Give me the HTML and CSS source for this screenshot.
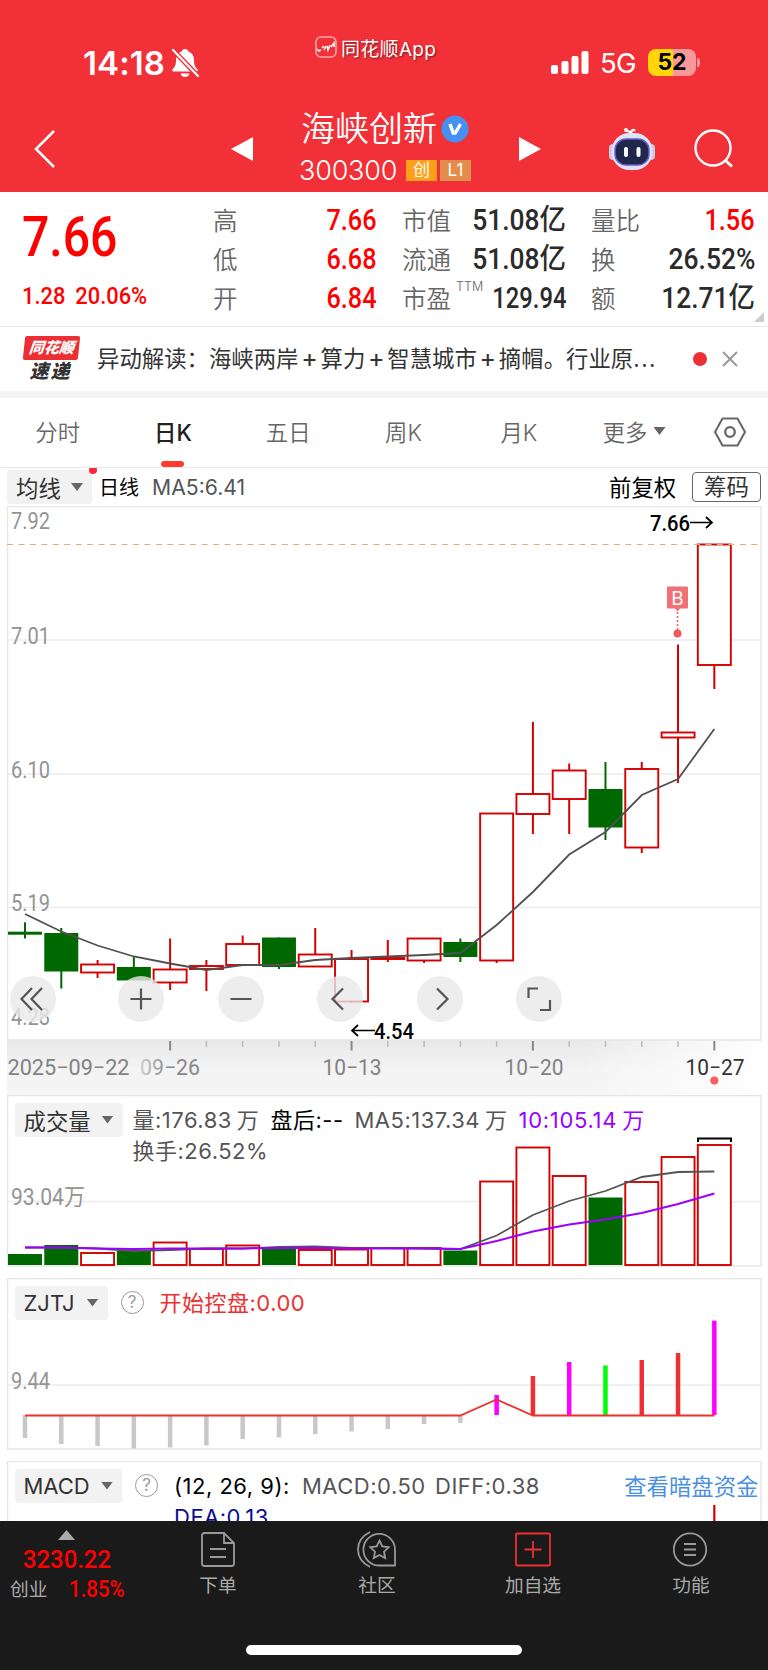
FILE: index.html
```html
<!DOCTYPE html>
<html lang="zh-CN">

<head>
    <meta charset="UTF-8">
    <meta name="viewport" content="width=device-width, initial-scale=1.0">
    <title>海峡创新 300300</title>
    <link rel="stylesheet" href="styles.css">
</head>

<body>
    <header class="header">
        <div class="status">
            <span class="time">14:18</span>
            <svg class="bell" width="28" height="30" viewBox="0 0 28 30">
                <path fill="#fff" d="M14 1c2 0 3 1 3.200 2.400c4 1.200 5.800 4.600 5.800 8.600c0 6 1.500 7 3.500 9.500c.6 1 .2 2-1 2H2.500c-1.200 0-1.600-1-1-2C3.500 19 5 18 5 12c0-4 1.800-7.400 5.800-8.600C11 2 12 1 14 1zM9.500 25.500h9c-.5 2-2.300 3.500-4.500 3.500s-4-1.500-4.500-3.500z" />
                <path stroke="#f23038" stroke-width="5" d="M1 1l26 27" />
                <path stroke="#fff" stroke-width="2.200" stroke-linecap="round" d="M2 2l25 26" />
            </svg>
            <div class="source">
                <svg width="22" height="22" viewBox="0 0 22 22" fill="none" stroke="#fff">
                    <rect x="1" y="1" width="20" height="20" rx="5" stroke-opacity=".6" stroke-width="1.500" />
                    <path stroke-width="1.500" d="M2 13l2 2 2-1M7 12l2-2M9 14l2-4M12 10l1 4 2-5M16 11l3-4v4" />
                </svg>
                <span>同花顺App</span>
            </div>
            <svg class="signal" width="38" height="24" viewBox="0 0 38 24" fill="#fff">
                <rect x="0" y="14" width="7" height="9" rx="2" />
                <rect x="10.500" y="10" width="7" height="13" rx="2" />
                <rect x="20.500" y="5" width="7" height="18" rx="2" />
                <rect x="30.500" y="0" width="7" height="23" rx="2" />
            </svg>
            <span class="network">5G</span>
            <div class="battery">52</div>
            <i class="nub"></i>
        </div>
        <nav class="nav">
            <svg class="back" width="22" height="40" viewBox="0 0 22 40" fill="none" stroke="#fff" stroke-width="2.500">
                <path d="M20 2L2 20l18 18" />
            </svg>
            <svg class="prev" width="22" height="24" viewBox="0 0 22 24" fill="#fff">
                <path d="M22 0v24L0 12z" />
            </svg>
            <div class="stock">
                <div class="name">海峡创新<svg width="28" height="28" viewBox="0 0 28 28">
                        <circle cx="14" cy="14" r="13.500" fill="#4590f0" />
                        <path d="M9 9l3.200 9h2L19.500 9" fill="none" stroke="#fff" stroke-width="3.400" />
                    </svg></div>
                <div class="code"><span>300300</span><b class="tag">创</b><b class="tag tag-l1">L1</b></div>
            </div>
            <svg class="next" width="22" height="24" viewBox="0 0 22 24" fill="#fff">
                <path d="M0 0v24l22-12z" />
            </svg>
            <svg class="robot" width="46" height="44" viewBox="0 0 46 44">
                <path d="M23 8c0-4-3-3-5-4M22 7c0-4 2-5 4-3" fill="none" stroke="#fff" stroke-width="2.200" />
                <circle cx="17" cy="3" r="2" fill="#fff" />
                <rect x="0" y="17" width="8" height="16" rx="4" fill="#c3cbe9" />
                <rect x="38" y="17" width="8" height="16" rx="4" fill="#c3cbe9" />
                <rect x="2.500" y="6" width="41" height="37" rx="18" fill="#dde4f8" />
                <rect x="6" y="12" width="34" height="26" rx="11" fill="#202849" stroke="#6a5bd2" stroke-width="1.500" />
                <rect x="15" y="20" width="4" height="10" rx="2" fill="#fff" />
                <rect x="27.500" y="20" width="4" height="10" rx="2" fill="#fff" />
            </svg>
            <svg class="search" width="40" height="40" viewBox="0 0 40 40" fill="none" stroke="#fff" stroke-width="2.400">
                <circle cx="19" cy="19" r="17.500" />
                <path d="M31.500 31.500L38 37.500" stroke-width="3" />
            </svg>
        </nav>
    </header>

    <section class="quote">
        <div class="last">
            <div class="price din">7.66</div>
            <div class="change din"><span>1.28</span><span>20.06%</span></div>
        </div>
        <dl class="col col-a">
            <div><dt>高</dt><dd class="din up">7.66</dd></div>
            <div><dt>低</dt><dd class="din up">6.68</dd></div>
            <div><dt>开</dt><dd class="din up">6.84</dd></div>
        </dl>
        <dl class="col col-b">
            <div><dt>市值</dt><dd class="din wide">51.08亿</dd></div>
            <div><dt>流通</dt><dd class="din wide">51.08亿</dd></div>
            <div><dt>市盈<sup>TTM</sup></dt><dd class="din tight">129.94</dd></div>
        </dl>
        <dl class="col col-c">
            <div><dt>量比</dt><dd class="din up">1.56</dd></div>
            <div><dt>换</dt><dd class="din wide">26.52%</dd></div>
            <div><dt>额</dt><dd class="din wide">12.71亿</dd></div>
        </dl>
        <i class="corner"></i>
    </section>

    <section class="news">
        <div class="news-logo"><b>同花顺</b><em>速递</em></div>
        <p>异动解读：海峡两岸<i>+</i>算力<i>+</i>智慧城市<i>+</i>摘帽。行业原<span>...</span></p>
        <span class="dot"></span>
        <svg width="16" height="16" viewBox="0 0 16 16" stroke="#999" stroke-width="2">
            <path d="M1 1l14 14M15 1L1 15" />
        </svg>
    </section>

    <nav class="tabs">
        <a>分时</a>
        <a class="active">日K</a>
        <a>五日</a>
        <a>周K</a>
        <a>月K</a>
        <a>更多<i class="caret"></i></a>
        <svg width="34" height="30" viewBox="0 0 34 30" fill="none" stroke="#666" stroke-width="2">
            <path d="M9.500 1.500h15l7.500 13.500-7.500 13.500h-15L2 15z" stroke-linejoin="round" />
            <circle cx="17" cy="15" r="4.800" stroke-width="2.300" />
        </svg>
    </nav>

    <div class="ma-bar">
        <button class="pick">均线<i class="caret"></i></button>
        <i class="new"></i>
        <b class="period">日线</b>
        <span class="ma">MA5:6.41</span>
        <span class="adjust">前复权</span>
        <button class="chips">筹码</button>
    </div>

    <section class="kline">
        <svg id="kline" width="768" height="589" viewBox="0 506 768 589"></svg>
        <div class="tools">
            <svg viewBox="0 0 46 46"><path d="M22 12L11.500 23 22 34M32 12L21.500 23 32 34" /></svg>
            <svg viewBox="0 0 46 46"><path d="M12.500 23h21M23 12.500v21" /></svg>
            <svg viewBox="0 0 46 46"><path d="M12.500 23h21" /></svg>
            <svg viewBox="0 0 46 46"><path d="M26 12.500L15.500 23 26 33.500" /></svg>
            <svg viewBox="0 0 46 46"><path d="M20 12.500L30.500 23 20 33.500" /></svg>
            <svg viewBox="0 0 46 46"><path d="M12.500 22V12.500H22M34 24v10h-10" /></svg>
        </div>
    </section>

    <section class="panel volume">
        <svg id="volume" width="768" height="183" viewBox="0 1095 768 183"></svg>
        <div class="panel-head">
            <button class="pick">成交量<i class="caret"></i></button>
            <div class="lines">
                <div><span class="w-vol">量:176.83<u>万</u></span><span class="w-after black">盘后:--</span><span class="w-ma5">MA5:137.34<u>万</u></span><span class="purple">10:105.14<u>万</u></span></div>
                <div>换手:26.52%</div>
            </div>
        </div>
    </section>

    <section class="panel zjtj">
        <svg id="zjtj" width="768" height="183" viewBox="0 1278 768 183"></svg>
        <div class="panel-head">
            <button class="pick">ZJTJ<i class="caret"></i></button>
            <span class="help">?</span>
            <div class="lines red">开始控盘:0.00</div>
        </div>
    </section>

    <section class="panel macd">
        <svg id="macd" width="768" height="60" viewBox="0 1461 768 60"></svg>
        <div class="panel-head">
            <button class="pick">MACD<i class="caret"></i></button>
            <span class="help">?</span>
            <div class="lines">
                <div><span class="w-param black">(12, 26, 9):</span><span class="w-macd">MACD:0.50</span><span>DIFF:0.38</span></div>
                <div class="navy">DEA:0.13</div>
            </div>
            <a class="link">查看暗盘资金</a>
        </div>
    </section>

    <footer class="footer">
        <div class="index">
            <i class="expand"></i>
            <div class="index-value din">3230.22</div>
            <div class="index-row"><span>创业</span><span class="din">1.85%</span></div>
        </div>
        <div class="item item-order">
            <svg width="36" height="38" viewBox="0 0 36 38">
                <path d="M24 2H4.500Q2 2 2 4.500v28Q2 35 4.500 35h27q2.500 0 2.500-2.500V12zM24 2v10h10M10 18h16M10 26h16" />
            </svg>
            下单
        </div>
        <div class="item item-club">
            <svg width="40" height="38" viewBox="0 0 40 38">
                <path d="M13 1C-3 9-3 28 13 36M38 34.500H22.500a15.800 15.800 0 1 1 15.500-16z" />
                <path d="M22.500 9.500l2.800 5.900 6.400.8-4.700 4.500 1.200 6.400-5.700-3.100-5.700 3.100 1.200-6.400-4.700-4.500 6.400-.8z" />
            </svg>
            社区
        </div>
        <div class="item item-add">
            <svg class="add" width="38" height="38" viewBox="0 0 38 38">
                <path d="M3 2.500h32q1 0 1 1v30q0 1-1 1H3q-1 0-1-1v-30q0-1 1-1zM19 10v17M10.500 18.500h17" />
            </svg>
            加自选
        </div>
        <div class="item item-more">
            <svg width="36" height="38" viewBox="0 0 36 38">
                <circle cx="17" cy="18.500" r="16.200" />
                <path d="M11 13h12M11 18.500h12M11 24h12" />
            </svg>
            功能
        </div>
        <div class="home"></div>
    </footer>

    <script>
        const RED = '#d40000';
        const GREEN = '#006800';
        const GREY = '#555';

        const x = i => 25 + i * 36.28;

        // wick top, body top, body bottom, wick bottom, falling
        const candles = [
            [922.3, 931.7, 934.7, 938.5, 1],
            [928, 933, 971.5, 988.5, 1],
            [960, 964.5, 972.5, 978],
            [957, 967, 980.5, 980.5, 1],
            [938.5, 969.5, 982.5, 990],
            [960, 966, 969, 991],
            [935.5, 944, 965, 965],
            [937.5, 937.5, 967, 969, 1],
            [928, 954.5, 966.5, 966.5],
            [950, 959, 1001.5, 1003],
            [940, 958, 959, 962],
            [938, 938.5, 960.5, 963],
            [938.5, 942, 957, 962, 1],
            [813.5, 813.5, 960.5, 963],
            [722, 794, 814, 834],
            [763.5, 770.5, 799, 834],
            [762, 789, 827.5, 840, 1],
            [762, 769, 847.5, 853],
            [644.5, 732.5, 737.5, 783],
            [544.5, 544.5, 665, 689]
        ];
        const ma5 = [914, 931.5, 945.5, 956.5, 963.5, 970, 965, 965, 960, 958, 956.5, 955, 953, 925, 892, 854.5, 832, 795, 779, 729];

        const volumes = [1254, 1245, 1253, 1251, 1242.5, 1249, 1245.5, 1249, 1250, 1249.5, 1248, 1248, 1250.5, 1181.5, 1147.5, 1176, 1197.5, 1182, 1157, 1145];
        const vol5 = [1247.5, 1247.5, 1248.5, 1251, 1250, 1248.5, 1248.5, 1247, 1246.5, 1248, 1248, 1248.5, 1249, 1235.5, 1215, 1201, 1191, 1177, 1172, 1171.5];
        const vol10 = [1247.5, 1247.5, 1248.5, 1249, 1248.5, 1248.5, 1248.5, 1248, 1248, 1248.5, 1248.5, 1248.5, 1249, 1241, 1231.5, 1224.5, 1219.5, 1213, 1204, 1193.5];

        const control = [1438, 1444, 1446, 1448.5, 1447.5, 1445.5, 1439, 1437.5, 1434, 1431.5, 1429, 1424, 1423, 1395, 1376, 1362, 1365.5, 1360, 1353, 1320.7];
        const controlColors = { 13: '#f0f', 14: '#ee3030', 15: '#f0f', 16: '#0f0', 17: '#ee3030', 18: '#ee3030', 19: '#f0f' };

        const line = (x1, y1, x2, y2, color, width, extra = '') =>
            `<line x1="${x1}" y1="${y1}" x2="${x2}" y2="${y2}" stroke="${color}" stroke-width="${width}" ${extra}/>`;

        const label = (tx, ty, width, text, cls = '') =>
            `<text x="${tx}" y="${ty}" textLength="${width}" lengthAdjust="spacingAndGlyphs" class="${cls}">${text}</text>`;

        const curve = (values, color, width = 1.8) =>
            `<polyline points="${values.map((v, i) => x(i) + ',' + v).join(' ')}" fill="none" stroke="${color}" stroke-width="${width}"/>`;

        const body = (i, top, bottom, falling) => falling
            ? `<rect x="${x(i) - 17}" y="${top}" width="34" height="${bottom - top}" fill="${GREEN}"/>`
            : `<rect x="${x(i) - 16.5}" y="${top}" width="33" height="${bottom - top}" fill="#fff" stroke="${RED}" stroke-width="1.9"/>`;

        function drawKline() {
            let s = `<defs>
                <linearGradient id="axis" x1="0" y1="0" x2="0" y2="1"><stop offset="0" stop-color="#e8e8e8"/><stop offset=".5" stop-color="#f3f3f3"/><stop offset="1" stop-color="#f5f5f5"/></linearGradient>
                <linearGradient id="fade"><stop offset="0" stop-color="#fff" stop-opacity="0"/><stop offset="1" stop-color="#fff"/></linearGradient>
                <linearGradient id="dateFade" gradientUnits="userSpaceOnUse" x1="134" x2="168"><stop offset="0" stop-color="#888" stop-opacity=".2"/><stop offset="1" stop-color="#888"/></linearGradient>
            </defs>`;
            s += '<rect x="7" y="1040" width="755" height="55" fill="url(#axis)"/><rect x="580" y="1040" width="188" height="55" fill="url(#fade)"/>';
            s += '<rect x="7.5" y="506.5" width="753.5" height="533.5" fill="#fff" stroke="#e6e6e6" stroke-width="1.5"/>';
            [640, 774, 907.3].forEach(y => s += line(8, y, 761, y, '#ebebeb', 1.3));
            s += label(11, 529, 39, '7.92', 'axis') + label(11, 644, 39, '7.01', 'axis') + label(11, 777.5, 39, '6.10', 'axis')
                + label(11, 911, 39, '5.19', 'axis') + label(11, 1025, 39, '4.28', 'axis');
            candles.forEach(([high, top, bottom, low, falling], i) => {
                s += line(x(i), high, x(i), low, falling ? GREEN : RED, 2) + body(i, top, bottom, falling);
            });
            s += line(7, 544.5, 761, 544.5, '#dcb07c', 1.2, 'stroke-dasharray="6 5.45"');
            s += curve(ma5, '#505050');
            s += label(650, 531, 40, '7.66', 'mark') + label(374, 1038.5, 40, '4.54', 'mark');
            s += '<path d="M690 522.5h22M706 517l6 5.500-6 5.500M375 1030.500h-23M358 1025l-6 5.500 6 5.500" fill="none" stroke="#000" stroke-width="1.7"/>';
            // buy marker
            s += '<path d="M667.5 586.500h19.500q1 0 1 1v20q0 1-1 1h-7l-2.500 3-2.500-3h-7q-1 0-1-1v-20q0-1 .5-1z" fill="#f07074"/>';
            s += '<text x="677.5" y="604.500" text-anchor="middle" class="buy">B</text>';
            s += line(677.5, 612, 677.5, 630, '#e96a6c', 1.7, 'stroke-dasharray="2 2"') + '<circle cx="677.5" cy="633.5" r="4" fill="#ee5a5c"/>';
            for (let i = 4; i < 20; i++) {
                const major = [4, 9, 14, 19].includes(i);
                s += line(x(i), 1041, x(i), major ? 1050.5 : 1047, major ? '#888' : '#bbb', major ? 2 : 1.5);
            }
            s += label(7.5, 1074.5, 122, '2025−09−22', 'date') + label(140, 1074.5, 60, '09−26', 'date fading')
                + label(322.5, 1074.5, 59, '10−13', 'date') + label(504.5, 1074.5, 59, '10−20', 'date') + label(685.5, 1074.5, 59, '10−27', 'date today');
            s += '<circle cx="714.3" cy="1080.5" r="4" fill="#ff5c5c"/>';
            document.getElementById('kline').innerHTML = s;
        }

        function drawVolume() {
            let s = '<rect x="7.5" y="1095.5" width="753.5" height="170.5" fill="#fff" stroke="#e6e6e6" stroke-width="1.5"/>';
            s += line(8, 1201.5, 761, 1201.5, '#ebebeb', 1.3) + label(11, 1205, 74, '93.04万', 'axis');
            volumes.forEach((top, i) => s += body(i, top, 1265, candles[i][4]));
            s += '<path d="M698 1142v-3.500h33v3.500" fill="none" stroke="#000" stroke-width="2"/>';
            s += curve(vol5, GREY) + curve(vol10, '#9b00ff', 2);
            document.getElementById('volume').innerHTML = s;
        }

        function drawControl() {
            let s = '<rect x="7.5" y="1278.5" width="753.5" height="170.5" fill="#fff" stroke="#e6e6e6" stroke-width="1.5"/>';
            s += line(8, 1385, 761, 1385, '#ebebeb', 1.3) + label(11, 1388.5, 39, '9.44', 'axis');
            control.forEach((end, i) => s += line(x(i), 1415, x(i), end, controlColors[i] || '#c8c8c8', 4.5));
            s += curve(control.map((v, i) => i === 13 ? 1399.5 : 1415.5), '#ee3030');
            document.getElementById('zjtj').innerHTML = s;
        }

        function drawMacd() {
            document.getElementById('macd').innerHTML =
                '<rect x="7.5" y="1461.5" width="753.5" height="170" fill="#fff" stroke="#e6e6e6" stroke-width="1.5"/>'
                + line(x(19), 1505, x(19), 1521, RED, 2.2);
        }

        drawKline();
        drawVolume();
        drawControl();
        drawMacd();
    </script>
</body>

</html>
```

FILE: styles.css
```css
* {
    box-sizing: border-box;
}

body {
    margin: 0;
    width: 768px;
    height: 1670px;
    overflow: hidden;
    background: #fff;
    color: #333;
    font-family: Inter, "Noto Sans CJK SC", sans-serif;
    font-size: 22.4px;
}

dl,
dd,
p {
    margin: 0;
}

i,
em {
    font-style: normal;
}

svg {
    display: block;
    flex: none;
}

button {
    border: none;
    padding: 0;
    font: inherit;
    color: inherit;
}

.din {
    font-family: Roboto, "Noto Sans CJK SC", sans-serif;
    font-weight: 500;
    transform: scaleX(0.87);
    transform-origin: left center;
    white-space: nowrap;
}

.caret {
    width: 12px;
    height: 8px;
    background: #666;
    clip-path: polygon(0 0, 100% 0, 50% 100%);
}

/* header */
.header {
    height: 192px;
    background: #f23038;
    color: #fff;
}

.status {
    display: flex;
    align-items: center;
    height: 100px;
    padding: 25px 0 0 83px;
}

.time {
    width: 88px;
    font-size: 33px;
    font-weight: 600;
    letter-spacing: 0.1px;
}

.source {
    display: flex;
    align-items: center;
    gap: 4px;
    width: 126px;
    margin: -31px 0 0 116px;
    font-size: 19px;
    letter-spacing: 0.3px;
    white-space: nowrap;
    text-shadow: 1px 1px 2px rgba(0, 0, 0, 0.5);
}

.signal {
    margin-left: 110px;
}

.network {
    width: 48px;
    padding-left: 11px;
    font-size: 27.5px;
    letter-spacing: -0.8px;
}

.battery {
    width: 48px;
    height: 27px;
    margin-left: 11px;
    margin-right: 1px;
    border-radius: 8px;
    background: linear-gradient(90deg, #ffd60a 52%, #f9989c 52%);
    color: #000;
    font-size: 23px;
    font-weight: 700;
    line-height: 27px;
    text-align: center;
}

.nub {
    width: 3px;
    height: 9px;
    border-radius: 0 3px 3px 0;
    background: #f9989c;
}

.nav {
    display: flex;
    align-items: center;
    height: 98px;
    padding-left: 34px;
}

.prev {
    margin-left: 175px;
}

.stock {
    width: 242px;
    margin-left: 46px;
    margin-top: -2px;
}

.name {
    display: flex;
    align-items: center;
    gap: 4px;
    height: 44px;
    padding-left: 2px;
    font-size: 34px;
    font-weight: 350;
    line-height: 44px;
}

.code {
    display: flex;
    align-items: center;
    height: 38px;
}

.code span {
    width: 107px;
    font-size: 27px;
    font-weight: 300;
    letter-spacing: -0.2px;
}

.tag {
    width: 31px;
    height: 21px;
    margin-right: 3px;
    background: #ff9f1c;
    font-size: 17px;
    font-weight: 400;
    line-height: 21px;
    text-align: center;
}

.tag-l1 {
    background: #e28d4b;
}

.next {
    margin-left: -22px;
}

.robot {
    margin-left: 68px;
}

.search {
    margin-left: 39px;
}

/* quote */
.quote {
    position: relative;
    display: flex;
    height: 135px;
    border-bottom: 1px solid #e8e8e8;
}

.last {
    width: 213px;
    padding-left: 22px;
    color: #f00;
}

.price {
    height: 89px;
    padding-top: 10px;
    font-size: 56px;
    line-height: 70px;
    transform: scaleX(0.86);
}

.change {
    display: flex;
    gap: 11px;
    font-size: 24px;
    line-height: 30px;
    transform: scaleX(0.91);
}

.col {
    padding-top: 9px;
}

.col > div {
    display: flex;
    justify-content: space-between;
    height: 39px;
    line-height: 40px;
}

.col dt {
    position: relative;
    color: #666;
    font-size: 24.5px;
    font-weight: 350;
}

.col dd {
    margin-top: -1px;
    color: #2b2b2b;
    font-size: 29px;
    transform-origin: right center;
}

.col .up {
    color: #f00;
}

.col .wide {
    transform: scaleX(0.91);
}

.col .tight {
    transform: scaleX(0.82);
}

.col sup {
    position: absolute;
    left: 54px;
    top: 0;
    font-size: 12.5px;
    line-height: 16px;
}

.col-a {
    width: 164px;
}

.col-b {
    width: 164px;
    margin-left: 25px;
}

.col-c {
    width: 164px;
    margin-left: 25px;
}

.corner {
    position: absolute;
    right: 4px;
    bottom: 4px;
    width: 10px;
    height: 10px;
    background: #ccc;
    clip-path: polygon(100% 0, 100% 100%, 0 100%);
}

/* news */
.news {
    display: flex;
    align-items: center;
    height: 71px;
    padding-left: 23px;
    border-bottom: 7px solid #f4f4f4;
}

.news-logo {
    width: 74px;
    height: 47px;
    text-align: center;
}

.news-logo b {
    display: block;
    width: 55px;
    height: 24px;
    margin-left: 1px;
    border-radius: 2px;
    background: #ea3033;
    color: #fff;
    font-size: 15px;
    font-style: italic;
    font-weight: 900;
    line-height: 24px;
    transform: skewX(-6deg);
}

.news-logo em {
    display: block;
    width: 55px;
    font-size: 19px;
    font-weight: 900;
    font-style: italic;
    letter-spacing: 2px;
    line-height: 23px;
}

.news p {
    width: 596px;
    margin-top: -4px;
    font-size: 22.4px;
    white-space: nowrap;
}

.news p i {
    display: inline-block;
    width: 22px;
    font-size: 25px;
    line-height: 22px;
    text-align: center;
}

.news p span {
    letter-spacing: 1.5px;
}

.dot {
    width: 14px;
    height: 14px;
    margin-right: 15px;
    border-radius: 50%;
    background: #ea3033;
}

/* period tabs */
.tabs {
    display: flex;
    align-items: center;
    height: 70px;
    border-bottom: 1px solid #e8e8e8;
    color: #666;
}

.tabs a {
    position: relative;
    display: flex;
    align-items: center;
    justify-content: center;
    gap: 6px;
    width: 115.3px;
    height: 69px;
    padding-bottom: 3px;
    font-weight: 350;
}

.tabs svg {
    margin-left: 21px;
    margin-top: -1px;
}

.tabs .active {
    color: #222;
    font-weight: 500;
}

.tabs .active::after {
    content: "";
    position: absolute;
    bottom: 0;
    left: 46px;
    width: 23px;
    height: 6px;
    border-radius: 3px;
    background: #ff3b30;
}

/* indicator bar */
.pick {
    display: flex;
    align-items: center;
    justify-content: space-between;
    height: 34px;
    padding: 0 9px;
    border-radius: 4px;
    background: #f2f2f2;
}

.ma-bar {
    display: flex;
    align-items: center;
    height: 38px;
    padding-left: 7px;
    overflow: hidden;
}

.ma-bar .pick {
    width: 85px;
}

.new {
    width: 8px;
    height: 8px;
    margin: -34px 0 0 -3px;
    border-radius: 50%;
    background: #ff2636;
}

.period {
    width: 53px;
    margin-left: 2px;
    margin-top: -2px;
    color: #000;
    font-size: 20px;
    font-weight: 400;
}

.ma {
    width: 457px;
    color: #555;
    font-size: 21.2px;
}

.adjust {
    width: 83px;
    margin-top: -2px;
    color: #000;
}

.chips {
    width: 69px;
    height: 30px;
    border: 1px solid #666;
    border-radius: 4px;
    background: #fff;
    line-height: 26px;
}

/* charts */
.kline {
    position: relative;
    height: 589px;
}

.axis,
.date,
.mark {
    font-family: Roboto, "Noto Sans CJK SC", sans-serif;
    font-size: 23px;
    fill: #949494;
}

.date {
    font-size: 21.5px;
    font-weight: 450;
    fill: #828282;
}

.date.fading {
    fill: url(#dateFade);
}

.date.today {
    fill: #333;
}

.mark {
    font-size: 22px;
    font-weight: 500;
    fill: #000;
}

.buy {
    font-size: 19px;
    fill: #fff;
}

.tools {
    position: absolute;
    left: 9.5px;
    top: 470px;
    display: flex;
    gap: 53.4px;
}

.tools svg {
    width: 46px;
    height: 46px;
    border-radius: 50%;
    background: rgba(232, 232, 232, 0.8);
    fill: none;
    stroke: #555;
    stroke-width: 2.2;
}

.tools svg:first-child {
    margin-right: 9.5px;
}

.panel {
    position: relative;
    height: 183px;
}

.panel > svg {
    position: absolute;
    left: 0;
    top: 0;
}

.panel-head {
    position: relative;
    display: flex;
    align-items: flex-start;
    padding: 7.5px 0 0 14.5px;
}

.volume .pick {
    width: 108px;
    margin-right: 10px;
}

.zjtj .pick {
    width: 93px;
}

.macd .pick {
    width: 107.5px;
}

.zjtj .pick,
.macd .pick,
.lines {
    font-size: 22px;
}

.lines {
    color: #555;
    letter-spacing: 0.5px;
    line-height: 35px;
    white-space: nowrap;
}

.lines > div {
    display: flex;
    height: 31px;
}

.lines u {
    margin-left: 5px;
    text-decoration: none;
}

.w-vol {
    width: 138px;
}

.w-after {
    width: 84px;
}

.w-ma5 {
    width: 164px;
}

.w-param {
    width: 128px;
}

.w-macd {
    width: 133px;
}

.black {
    color: #000;
}

.purple {
    color: #9b00ff;
    letter-spacing: 0.7px;
}

.red {
    color: #ee3030;
}

.navy {
    color: #0a0a96;
}

.help {
    width: 23px;
    height: 23px;
    margin: 5.5px 16px 0 13px;
    border: 1.5px solid #999;
    border-radius: 50%;
    color: #999;
    font-size: 17px;
    line-height: 20px;
    text-align: center;
}

.macd {
    height: 60px;
    overflow: hidden;
}

.link {
    margin-left: auto;
    margin-right: 9.5px;
    color: #4a90e2;
    line-height: 35px;
}

/* footer */
.footer {
    position: relative;
    display: flex;
    height: 149px;
    background: #1a1a1a;
    color: #aaa;
    font-size: 18.7px;
}

.index {
    width: 200px;
    padding: 9px 0 0 10px;
}

.expand {
    display: block;
    width: 17px;
    height: 10px;
    margin-left: 48px;
    background: #aaa;
    clip-path: polygon(50% 0, 100% 100%, 0 100%);
}

.index-value {
    margin-left: 13px;
    color: #f00;
    font-size: 26.5px;
    line-height: 37px;
    transform: scaleX(0.9);
}

.index-row {
    display: flex;
    line-height: 26px;
}

.index-row span:first-child {
    width: 59px;
}

.index-row .din {
    color: #f00;
    font-size: 23px;
    transform: scaleX(0.89);
}

.item {
    display: flex;
    flex-direction: column;
    align-items: center;
    width: 80px;
    height: 90px;
    padding-top: 10px;
    line-height: 32px;
}

.item svg {
    margin-bottom: 1px;
    fill: none;
    stroke: #999;
    stroke-width: 1.8;
}

.item .add {
    stroke: #ee3030;
}

.item-order {
    margin-left: -22px;
}

.item-club {
    margin-left: 79px;
}

.item-add {
    margin-left: 76px;
}

.item-more {
    margin-left: 78px;
}

.home {
    position: absolute;
    left: 246px;
    bottom: 15px;
    width: 276px;
    height: 10px;
    border-radius: 5px;
    background: #fff;
}
```
